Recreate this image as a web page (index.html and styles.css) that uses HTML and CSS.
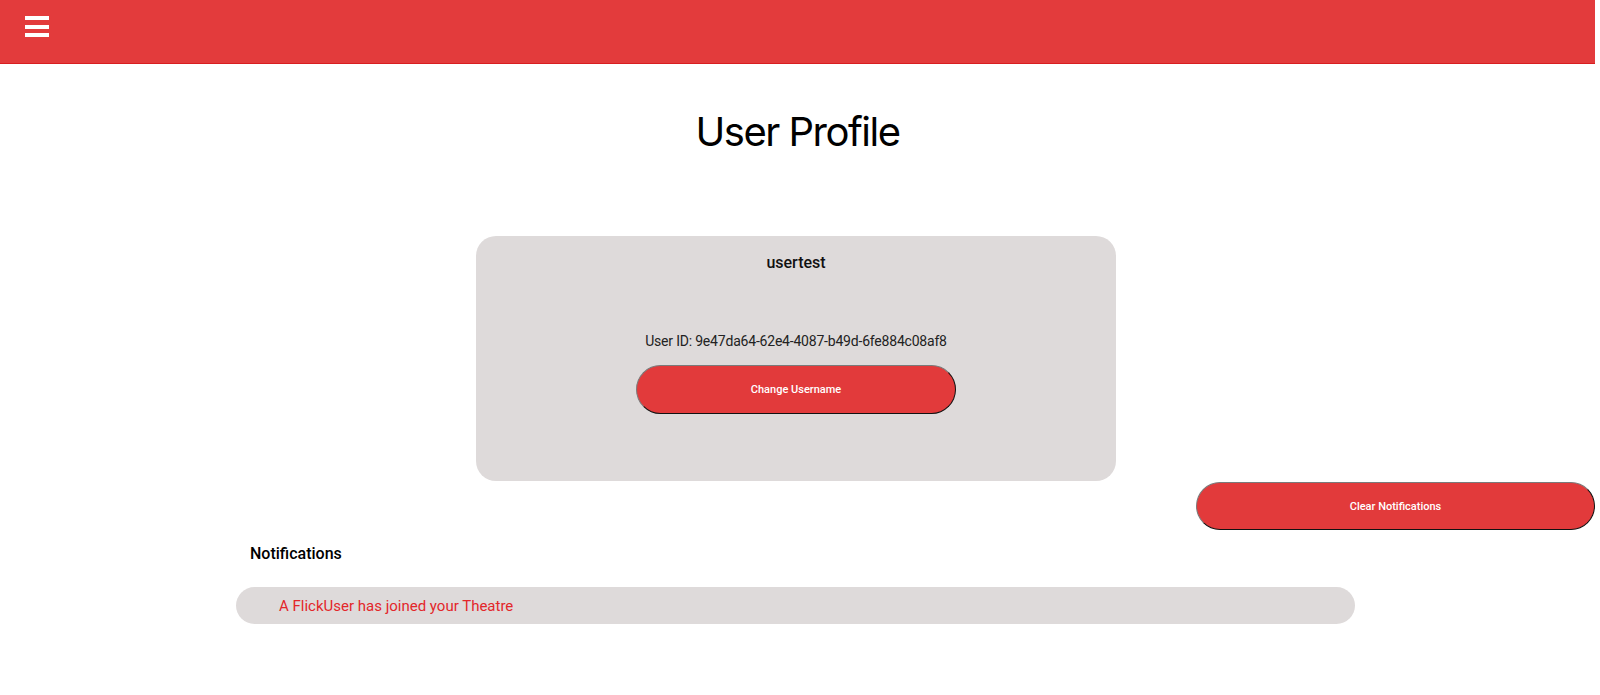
FILE: index.html
```html
<!DOCTYPE html>
<html lang="en">
<head>
<meta charset="utf-8">
<title>User Profile</title>
<link rel="stylesheet" href="styles.css">
</head>
<body>
<div class="page">
  <header class="topbar">
    <button class="menu" aria-label="Menu">
      <span class="bar"></span><span class="bar"></span><span class="bar"></span>
    </button>
  </header>
  <h1 class="title">User Profile</h1>
  <section class="card">
    <div class="username">usertest</div>
    <div class="userid">User ID: 9e47da64-62e4-4087-b49d-6fe884c08af8</div>
    <button class="pill change">Change Username</button>
  </section>
  <div class="clear-row">
    <button class="pill clear">Clear Notifications</button>
  </div>
  <section class="notifications">
    <h2 class="notif-title">Notifications</h2>
    <div class="notif">A FlickUser has joined your Theatre</div>
  </section>
</div>
</body>
</html>
```

FILE: styles.css
```css
html, body {
  margin: 0;
  padding: 0;
  background: #ffffff;
}
body {
  font-family: Roboto, "Liberation Sans", Arial, sans-serif;
  color: #111;
}
.page {
  width: 1595px;
  display: flex;
  flex-direction: column;
}
.topbar {
  height: 63px;
  background: #e33b3c;
  border-bottom: 1px solid #d81e20;
  display: flex;
  align-items: flex-start;
}
.menu {
  margin: 16px 0 0 25px;
  padding: 0;
  border: none;
  background: transparent;
  display: flex;
  flex-direction: column;
  gap: 4.5px;
  cursor: pointer;
}
.bar {
  display: block;
  width: 24px;
  height: 4px;
  background: #ffffff;
}
.title {
  margin: 44px 0 0;
  text-align: center;
  font-family: Inter, "Noto Sans", sans-serif;
  font-weight: 400;
  font-size: 40px;
  line-height: 48px;
  color: #000;
  letter-spacing: -1.5px;
}
.card {
  width: 640px;
  height: 245px;
  box-sizing: border-box;
  margin: 80px 0 0 476px;
  background: #dedada;
  border-radius: 20px;
  padding-top: 17px;
  display: flex;
  flex-direction: column;
  align-items: center;
}
.username {
  font-size: 16px;
  font-weight: 500;
  line-height: 19px;
  color: #111;
}
.userid {
  margin-top: 61px;
  font-size: 14px;
  line-height: 17px;
  letter-spacing: -0.2px;
  color: #222;
}
.pill {
  background: #e23a3b;
  color: #fff;
  font-family: Roboto, "Liberation Sans", Arial, sans-serif;
  font-size: 11px;
  font-weight: 500;
  border-style: solid;
  border-width: 1.5px;
  border-color: #7a7a7a #111 #111 #7a7a7a;
  cursor: pointer;
}
.change {
  margin-top: 15px;
  width: 320px;
  height: 49px;
  border-radius: 25px;
}
.clear-row {
  display: flex;
  justify-content: flex-end;
  margin-top: 1px;
}
.clear {
  width: 399px;
  height: 48px;
  border-radius: 24px;
}
.notifications {
  display: flex;
  flex-direction: column;
}
.notif-title {
  margin: 14px 0 0 250px;
  font-size: 16px;
  font-weight: 500;
  line-height: 19px;
  color: #000;
}
.notif {
  margin: 24px 0 0 236px;
  width: 1119px;
  height: 37px;
  box-sizing: border-box;
  background: #dedada;
  border-radius: 18.5px;
  padding-left: 43px;
  display: flex;
  align-items: center;
  color: #e3262a;
  font-size: 15px;
}
```
